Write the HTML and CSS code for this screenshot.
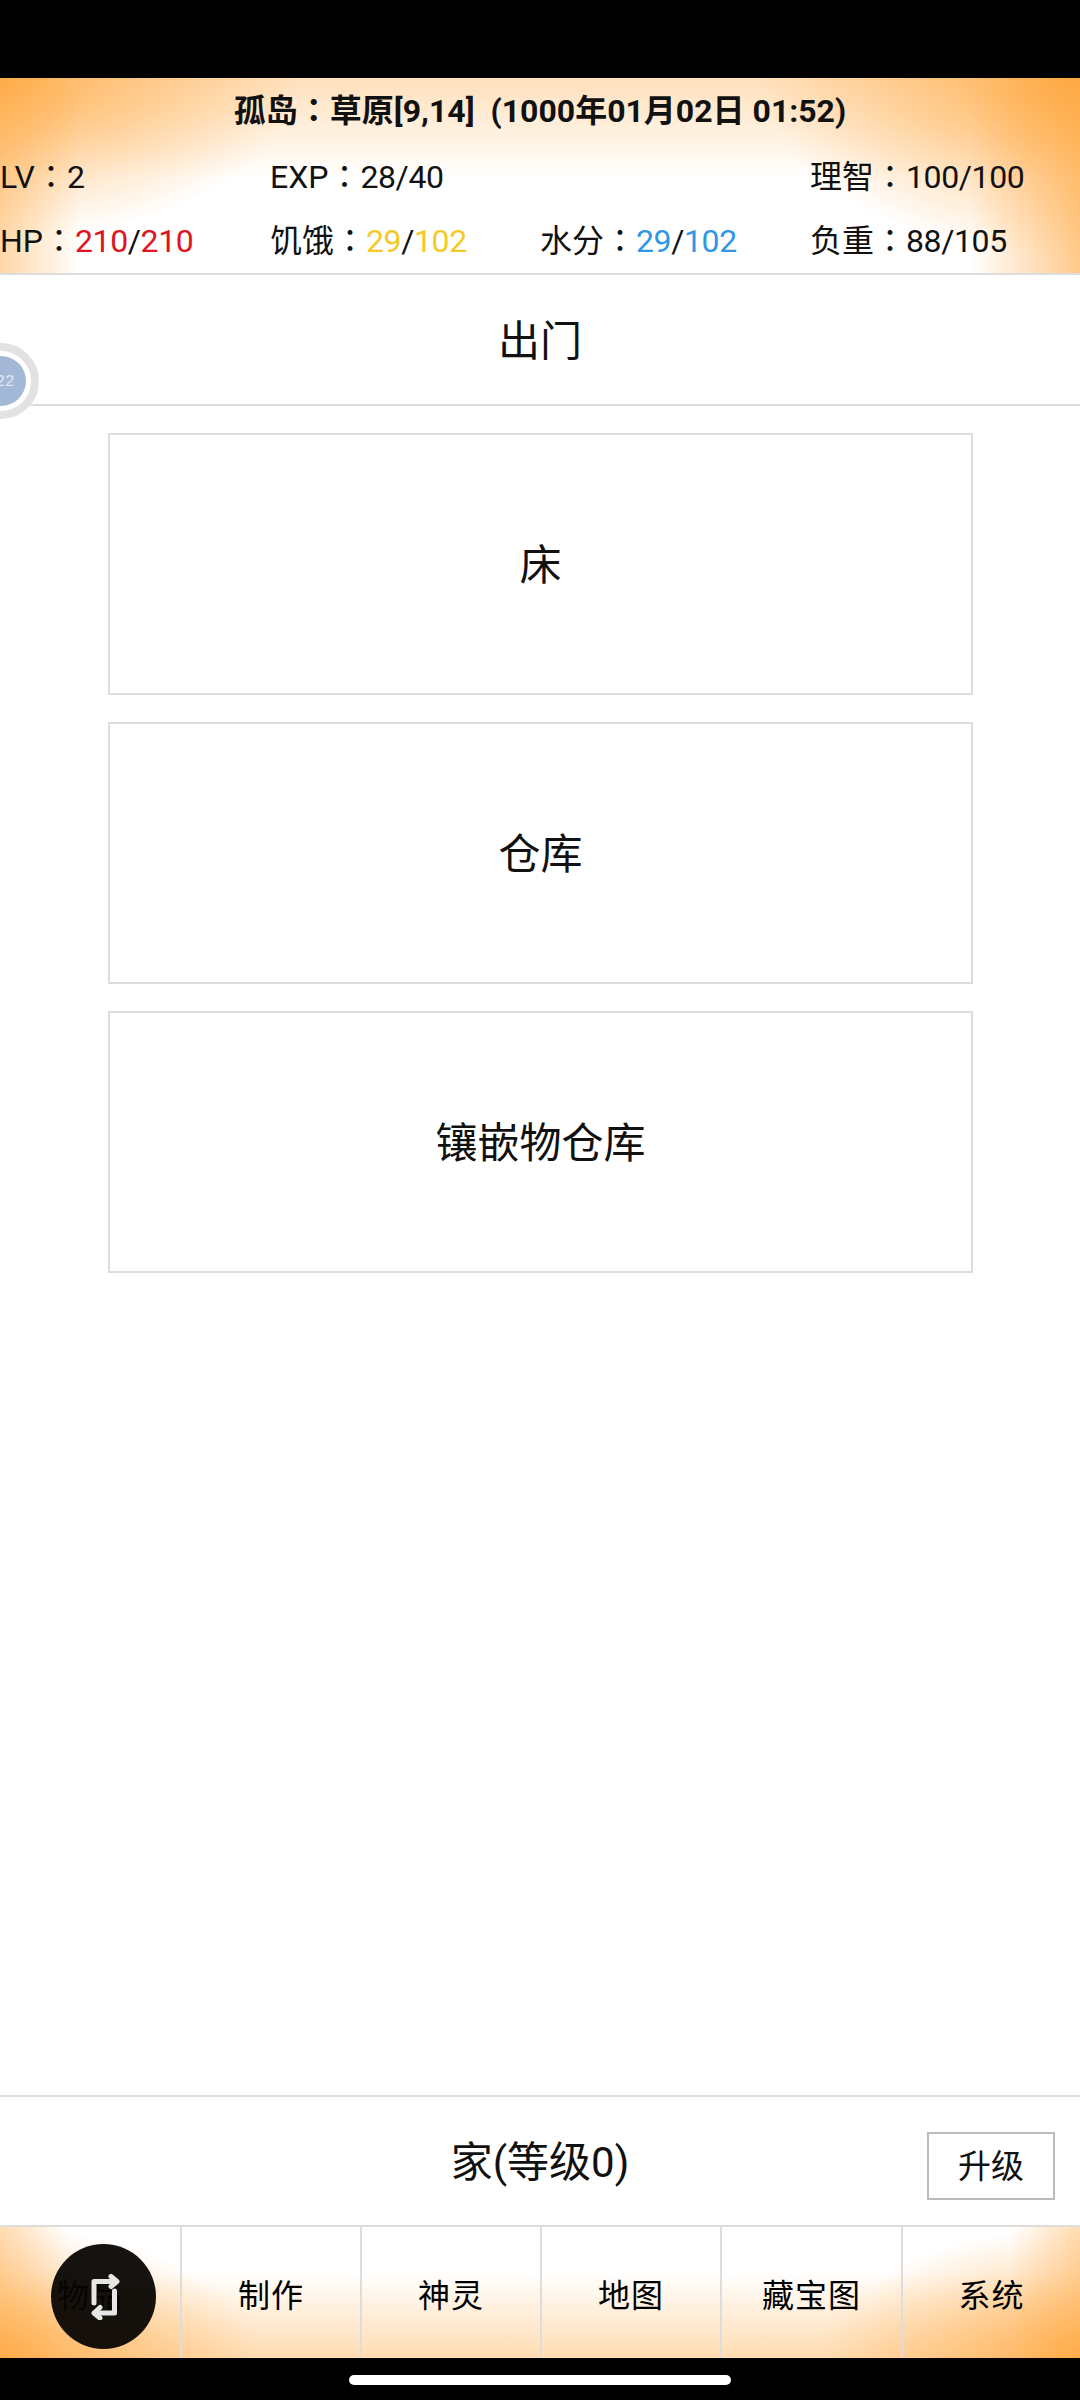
FILE: index.html
```html
<!DOCTYPE html>
<html lang="zh">
<head>
    <meta charset="UTF-8">
    <meta name="viewport" content="width=device-width, initial-scale=1.0">
    <title>孤岛</title>
    <link rel="stylesheet" href="styles.css">
</head>
<body>
    <div class="status-bar"></div>

    <header class="stats">
        <div class="stats-title">孤岛<span class="colon" lang="zh-TW">：</span>草原[9,14]<span class="paren">(1000年01月02日 01:52)</span></div>
        <div class="stats-row">
            <div>LV<span class="colon" lang="zh-TW">：</span><span class="num">2</span></div>
            <div>EXP<span class="colon" lang="zh-TW">：</span><span class="num">28/40</span></div>
            <div></div>
            <div>理智<span class="colon" lang="zh-TW">：</span><span class="num">100/100</span></div>
        </div>
        <div class="stats-row">
            <div>HP<span class="colon" lang="zh-TW">：</span><span class="num"><span class="red">210</span>/<span class="red">210</span></span></div>
            <div>饥饿<span class="colon" lang="zh-TW">：</span><span class="num"><span class="yellow">29</span>/<span class="yellow">102</span></span></div>
            <div>水分<span class="colon" lang="zh-TW">：</span><span class="num"><span class="blue">29</span>/<span class="blue">102</span></span></div>
            <div>负重<span class="colon" lang="zh-TW">：</span><span class="num">88/105</span></div>
        </div>
    </header>

    <div class="page-title">出门</div>

    <main class="rooms">
        <div class="room">床</div>
        <div class="room">仓库</div>
        <div class="room">镶嵌物仓库</div>
    </main>

    <div class="home-bar">
        <div class="home-name">家(等级0)</div>
        <div class="upgrade">升级</div>
    </div>

    <nav class="tabs">
        <div class="tab">物品</div>
        <div class="tab">制作</div>
        <div class="tab">神灵</div>
        <div class="tab">地图</div>
        <div class="tab">藏宝图</div>
        <div class="tab">系统</div>
    </nav>

    <div class="gesture-area"><div class="gesture-pill"></div></div>

    <div class="float-badge"><div class="float-inner">22</div></div>

    <div class="swap-btn">
        <svg width="36" height="46" viewBox="0 0 36 46" fill="none" stroke="#e6e6e6" stroke-width="5" stroke-linecap="round" stroke-linejoin="round">
            <path d="M8 29V7.5H30"/>
            <path d="M25 2.5L31 7.5L25 12.5"/>
            <path d="M28.5 17V39H9"/>
            <path d="M14 33.5L8 39L14 44"/>
        </svg>
    </div>
</body>
</html>
```

FILE: styles.css
```css
* {
    box-sizing: border-box;
}
html, body {
    margin: 0;
    padding: 0;
}
body {
    position: relative;
    width: 1080px;
    height: 2400px;
    overflow: hidden;
    display: flex;
    flex-direction: column;
    background: white;
    color: #111;
    font-family: Roboto, "Noto Sans CJK SC", sans-serif;
    font-size: 32px;
}
.status-bar {
    height: 78px;
    background: black;
}
.stats {
    height: 197px;
    padding-top: 5px;
    border-bottom: 2px solid #ddd;
    background:
        radial-gradient(ellipse 300px 160px at 0 0, rgba(255, 166, 60, 0.8), rgba(255, 166, 60, 0)),
        radial-gradient(ellipse 320px 180px at 100% 0, rgba(255, 166, 60, 0.85), rgba(255, 166, 60, 0)),
        linear-gradient(to right, rgba(255, 166, 60, 0.45), rgba(255, 166, 60, 0) 80px),
        linear-gradient(to left, rgba(255, 166, 60, 0.6), rgba(255, 166, 60, 0) 110px),
        linear-gradient(to bottom, rgba(255, 166, 60, 0.35), rgba(255, 166, 60, 0) 100px),
        white;
}
.stats-title {
    height: 59px;
    line-height: 50px;
    text-align: center;
    font-weight: 700;
    font-size: 32px;
}
.paren {
    margin-left: 16px;
}
.stats-row {
    display: grid;
    grid-template-columns: repeat(4, 270px);
    height: 64px;
    line-height: 64px;
}
.colon {
    font-family: "Noto Sans CJK TC", sans-serif;
}
.num {
    letter-spacing: -0.4px;
}
.red {
    color: #e0141e;
}
.yellow {
    color: #f5c926;
}
.blue {
    color: #2f97e4;
}
.page-title {
    height: 131px;
    line-height: 133px;
    text-align: center;
    font-size: 42px;
    border-bottom: 2px solid #ddd;
}
.rooms {
    flex: 1;
    padding: 27px 107px 0 108px;
    display: flex;
    flex-direction: column;
    gap: 27px;
}
.room {
    height: 262px;
    padding-bottom: 5px;
    border: 2px solid #ddd;
    display: flex;
    align-items: center;
    justify-content: center;
    font-size: 42px;
}
.home-bar {
    height: 132px;
    position: relative;
    padding-bottom: 5px;
    border-top: 2px solid #ddd;
    border-bottom: 2px solid #ddd;
    display: flex;
    align-items: center;
    justify-content: center;
}
.home-name {
    font-size: 42px;
}
.upgrade {
    position: absolute;
    right: 25px;
    top: 35px;
    width: 128px;
    height: 68px;
    padding-bottom: 5px;
    border: 2px solid #bbb;
    background: white;
    display: flex;
    align-items: center;
    justify-content: center;
    font-size: 33px;
}
.tabs {
    height: 131px;
    display: grid;
    grid-template-columns: repeat(4, 180px) 181px 179px;
    background:
        radial-gradient(ellipse 260px 130px at 0 100%, rgba(255, 166, 60, 0.8), rgba(255, 166, 60, 0)),
        radial-gradient(ellipse 260px 130px at 100% 100%, rgba(255, 166, 60, 0.8), rgba(255, 166, 60, 0)),
        linear-gradient(to right, rgba(255, 166, 60, 0.4), rgba(255, 166, 60, 0) 70px),
        linear-gradient(to left, rgba(255, 166, 60, 0.4), rgba(255, 166, 60, 0) 70px),
        linear-gradient(to top, rgba(255, 166, 60, 0.4), rgba(255, 166, 60, 0) 85px),
        white;
}
.tab {
    display: flex;
    align-items: center;
    justify-content: center;
    font-size: 32px;
    letter-spacing: 1px;
    color: black;
    border-left: 2px solid #ddd;
}
.tab:first-child {
    border-left: none;
}
.gesture-area {
    height: 42px;
    background: black;
    padding-top: 17px;
}
.gesture-pill {
    width: 382px;
    height: 10px;
    margin: 0 auto;
    background: white;
    border-radius: 5px;
}
.float-badge {
    position: absolute;
    left: -37px;
    top: 343px;
    width: 76px;
    height: 76px;
    border: 8px solid #e2e2e2;
    border-radius: 50%;
    background: white;
    display: flex;
    align-items: center;
    justify-content: center;
}
.float-inner {
    width: 50px;
    height: 50px;
    padding-left: 8px;
    border-radius: 50%;
    background: #a3b8d6;
    color: #dfe6ef;
    font-family: "Liberation Mono", monospace;
    font-size: 16px;
    text-align: center;
    line-height: 52px;
}
.swap-btn {
    position: absolute;
    left: 51px;
    top: 2244px;
    width: 105px;
    height: 105px;
    border-radius: 50%;
    background: rgba(6, 4, 2, 0.94);
    display: flex;
    align-items: center;
    justify-content: center;
}
```
